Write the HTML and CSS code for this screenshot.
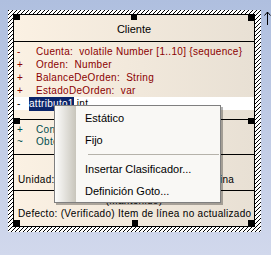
FILE: index.html
```html
<!DOCTYPE html>
<html lang="es">
  <head>
    <meta charset="UTF-8">
    <title>Cliente</title>
    <link rel="stylesheet" href="styles.css">
  </head>
  <body>
    <div class="canvas">
      <div class="selection">
        <div class="element">
          <div class="header">Cliente</div>
          <div class="comp attrs">
            <div class="row"><span class="vis">-</span><span>Cuenta:&nbsp; volatile Number [1..10] {sequence}</span></div>
            <div class="row"><span class="vis">+</span><span>Orden:&nbsp; Number</span></div>
            <div class="row"><span class="vis">+</span><span>BalanceDeOrden:&nbsp; String</span></div>
            <div class="row"><span class="vis">+</span><span>EstadoDeOrden:&nbsp; var</span></div>
            <div class="row editing"><span class="vis">-</span><span class="edit"><span class="sel">attributo1</span> int</span></div>
          </div>
          <div class="comp ops">
            <div class="row"><span class="vis">+</span><span>ConfirmarOrden()</span></div>
            <div class="row"><span class="vis">~</span><span>ObtenerEstado()</span></div>
          </div>
          <div class="comp note unit">Unidad: Departamento de ventas en la oficina</div>
          <div class="comp note defect">
            <div class="centered">(Mantenido)</div>
            <div>Defecto: (Verificado) Item de línea no actualizado</div>
          </div>
          <span class="handle h-tl"></span>
          <span class="handle h-tm"></span>
          <span class="handle h-tr"></span>
          <span class="handle h-ml"></span>
          <span class="handle h-mr"></span>
          <span class="handle h-bl"></span>
          <span class="handle h-bm"></span>
          <span class="handle h-br"></span>
        </div>
      </div>
      <svg class="cursor" width="7" height="14" viewBox="0 0 7 14">
        <path d="M3.5 1 V14 M0.5 4.5 L3.5 1 L6.5 4.5" fill="none" stroke="#000" stroke-width="1"/>
      </svg>
    </div>

    <div class="menu">
      <div class="menu-gutter"></div>
      <ul class="menu-list">
        <li class="menu-item">Estático</li>
        <li class="menu-item">Fijo</li>
        <li class="menu-sep"></li>
        <li class="menu-item">Insertar Clasificador...</li>
        <li class="menu-item">Definición Goto...</li>
      </ul>
    </div>
  </body>
</html>
```

FILE: styles.css
```css
html, body { margin: 0; width: 271px; height: 255px; overflow: hidden; }
body { background: linear-gradient(#afbfdf, #d1d8ec); font-family: "Liberation Sans", Arial, sans-serif; }

.canvas { display: flex; align-items: flex-start; padding: 10px 0 0 8px; }
.cursor { display: block; margin: 1px 0 0 3px; }

/* hatched selection frame */
.selection { width: 254px; height: 222px; box-sizing: border-box; padding: 4px 6px 5px 5px;
  background: repeating-linear-gradient(135deg, #000 0 1px, #fff 1px 2.83px); }
.element { position: relative; height: 100%; box-sizing: border-box; border: 1px solid #000;
  display: flex; flex-direction: column; font-size: 10px; letter-spacing: 0.3px; }

.header, .comp { background: linear-gradient(to right, #fbf1e3, #e8e0d4); }
.header { height: 27px; border-bottom: 1px solid #000; display: flex; justify-content: center; align-items: center;
  padding-top: 2px; box-sizing: border-box; font-size: 11px; letter-spacing: 0; color: #000; }
.comp { border-bottom: 1px solid #000; box-sizing: border-box; }
.comp:last-of-type { border-bottom: none; }

.row { display: flex; white-space: nowrap; }
.vis { width: 19px; padding-left: 3px; flex: none; }

.attrs { height: 78px; padding-top: 3px; color: #8b0000; }
.attrs .row { height: 13px; line-height: 13px; }
.attrs .editing { background: #fff; color: #000; }
.editing .vis { width: 9px; }
.edit { padding-left: 3px; }
.sel { background: #0a246a; color: #fff; padding: 1px 0 2px; }

.ops { height: 35px; padding-top: 4px; color: #004d4d; }
.ops .row { height: 12px; line-height: 12px; }

.note { color: #000; padding-left: 4px; white-space: nowrap; line-height: 13px; overflow: hidden; }
.unit { height: 36px; padding-top: 18px; }
.defect { flex: 1; padding-top: 3px; }
.centered { text-align: center; padding-right: 4px; }

.handle { position: absolute; width: 6px; height: 6px; background: #000; }
.h-tl { left: 0; top: -1px; }
.h-tm { left: 117px; top: -1px; }
.h-tr { right: 0; top: 0; }
.h-ml { left: 0; top: 103px; }
.h-mr { right: 0; top: 103px; }
.h-bl { left: 0; bottom: 0; }
.h-bm { left: 118px; bottom: 0; }
.h-br { right: 0; bottom: 0; }

/* context menu */
.menu { position: absolute; left: 54px; top: 105px; width: 165px; height: 96px; display: flex;
  border: 1px solid #7f7f7f; background: #f9f8f5; box-shadow: 2px 2px 0 rgba(0, 0, 0, 0.3);
  font-size: 11px; color: #000; }
.menu-gutter { width: 21px; flex: none; background: linear-gradient(to right, #fdfdfc, #c8c5bb); }
.menu-list { list-style: none; margin: 0; padding: 1px 0 0; flex: 1; }
.menu-item { height: 22px; line-height: 22px; padding-left: 9px; }
.menu-sep { height: 7px; margin-left: 12px; margin-right: 1px; background: linear-gradient(transparent 3px, #b5b2aa 3px 4px, transparent 4px); }
```
